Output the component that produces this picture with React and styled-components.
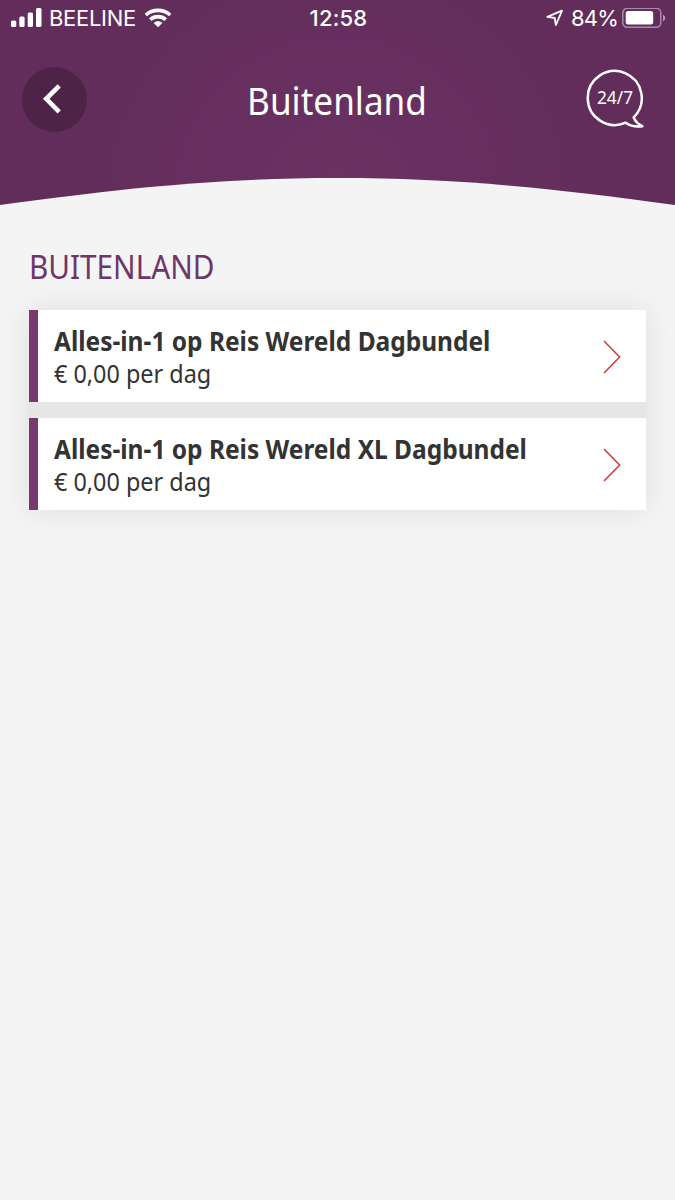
import styled, { createGlobalStyle } from 'styled-components'

const GlobalStyle = createGlobalStyle`
    *, *::before, *::after {
        box-sizing: border-box;
    }
    body {
        margin: 0;
        background: #f4f4f4;
        font-family: 'Noto Sans', 'Open Sans', sans-serif;
    }
`

const Screen = styled.div`
    width: 675px;
    height: 1200px;
    overflow: hidden;
    background: #f4f4f4;
`

const Header = styled.header`
    display: flex;
    flex-direction: column;
    height: 206px;
    background: radial-gradient(
        circle at 50% 200px,
        #6b3262 0,
        #662f5f 140px,
        #622d5a 290px
    );
`

const StatusBar = styled.div`
    display: grid;
    grid-template-columns: 1fr auto 1fr;
    align-items: center;
    height: 36px;
    padding: 0 9px 0 11px;
    color: #fff;
    font-family: Inter, 'Liberation Sans', sans-serif;
    font-size: 22px;
    line-height: 36px;
`

const StatusGroup = styled.div`
    display: flex;
    align-items: center;
    justify-content: ${(props) => (props.$end ? 'flex-end' : 'flex-start')};

    svg {
        flex: none;
    }
`

const StatusText = styled.span`
    margin: ${(props) => props.$margin || '0'};
    letter-spacing: ${(props) => props.$spacing || '0'};
    font-weight: ${(props) => props.$weight || 400};
    white-space: nowrap;
`

const NavBar = styled.div`
    display: grid;
    grid-template-columns: 66px 1fr 66px;
    align-items: center;
    height: 126px;
    padding: 0 23px 0 22px;
`

const BackButton = styled.button`
    display: flex;
    align-items: center;
    justify-content: center;
    width: 65px;
    height: 65px;
    padding: 0 3px 0 0;
    border: 0;
    border-radius: 50%;
    background: #4d2447;
`

const Title = styled.h1`
    margin: 2px 0 0;
    color: #fff;
    font-size: 39px;
    font-weight: 400;
    line-height: 50px;
    text-align: center;
    transform: scaleX(0.9);
`

const ChatButton = styled.button`
    width: 60px;
    height: 62px;
    padding: 0;
    border: 0;
    background: none;

    svg {
        display: block;
    }
`

const Wave = styled.svg`
    display: block;
    flex: none;
    margin-top: auto;
`

const Content = styled.main`
    padding: 38px 29px 0;
`

const SectionTitle = styled.h2`
    margin: 0 0 20px;
    color: #6f3468;
    font-size: 33px;
    font-weight: 400;
    line-height: 46px;
    transform: scaleX(0.9);
    transform-origin: left;
`

const BundleList = styled.div`
    display: flex;
    flex-direction: column;
    gap: 16px;
    box-shadow: 0 0 28px rgba(0, 0, 0, 0.09);
    background: #e6e6e6;
`

const BundleCard = styled.div`
    display: flex;
    align-items: center;
    justify-content: space-between;
    height: 92px;
    padding: 2px 24px 0 16px;
    border-left: 9px solid #79386f;
    background: #fff;
    color: #333;
`

const BundleName = styled.div`
    font-size: 26px;
    font-weight: 700;
    line-height: 32px;
    white-space: nowrap;
    transform: scaleX(0.942);
    transform-origin: left;
`

const BundlePrice = styled.div`
    font-size: 26px;
    font-weight: 400;
    line-height: 32px;
    transform: scaleX(0.9);
    transform-origin: left;
`

const bundles = [
    { name: 'Alles-in-1 op Reis Wereld Dagbundel', price: '€ 0,00 per dag' },
    { name: 'Alles-in-1 op Reis Wereld XL Dagbundel', price: '€ 0,00 per dag' },
]

function SignalIcon() {
    return (
        <svg width='31' height='20' viewBox='0 0 31 20' fill='#fff'>
            <rect x='0' y='12.5' width='5.3' height='6.5' rx='1.5' />
            <rect x='8.3' y='8.5' width='5.3' height='10.5' rx='1.5' />
            <rect x='16.7' y='4.5' width='5.3' height='14.5' rx='1.5' />
            <rect x='25' y='0' width='5.5' height='19' rx='1.5' />
        </svg>
    )
}

function WifiIcon() {
    return (
        <svg width='28' height='20' viewBox='0 0 28 20'>
            <g fill='none' stroke='#fff' strokeWidth='3.6'>
                <path d='M1.8 7C8.5 .8 19.5 .8 26.2 7' />
                <path d='M6.2 11.6C10.6 7.6 17.4 7.6 21.8 11.6' />
            </g>
            <path d='M9.6 15C12 12.5 16 12.5 18.4 15L14 19.3Z' fill='#fff' />
        </svg>
    )
}

function LocationIcon() {
    return (
        <svg width='18' height='18' viewBox='0 0 18 18'>
            <path
                d='M1.3 7.9L16 1.6L9.9 16L8.7 9Z'
                fill='none'
                stroke='#fff'
                strokeWidth='1.8'
                strokeLinejoin='round'
            />
        </svg>
    )
}

function BatteryIcon() {
    return (
        <svg width='44' height='21' viewBox='0 0 44 21'>
            <rect
                x='.8'
                y='.3'
                width='38'
                height='19'
                rx='4.5'
                fill='none'
                stroke='#fff'
                strokeOpacity='.45'
                strokeWidth='1.5'
            />
            <rect x='3.7' y='3' width='27.5' height='13.6' rx='2.5' fill='#fff' />
            <path d='M41 6.5Q43.3 7.5 43.3 10T41 13.5Z' fill='#fff' fillOpacity='.5' />
        </svg>
    )
}

function BackIcon() {
    return (
        <svg width='24' height='30' viewBox='0 0 24 30'>
            <path
                d='M18.2 1.8L5.2 14.8L18.2 27.8'
                fill='none'
                stroke='#fff'
                strokeWidth='4.6'
            />
        </svg>
    )
}

function ChatIcon() {
    return (
        <svg width='60' height='62' viewBox='0 0 60 62'>
            <path
                d='M47.6 49.3A27 27 0 1 0 39.6 54.7C43.8 57.8 50 59 56.4 58.2C52 56.2 49.2 53.4 47.6 49.3Z'
                fill='none'
                stroke='#fff'
                strokeWidth='2.5'
                strokeLinejoin='round'
            />
            <text
                x='11'
                y='36'
                fill='#fff'
                fontFamily='Noto Sans, sans-serif'
                fontSize='18'
                textLength='36'
                lengthAdjust='spacingAndGlyphs'
            >
                24/7
            </text>
        </svg>
    )
}

function ArrowIcon() {
    return (
        <svg width='20' height='34' viewBox='0 0 20 34'>
            <path
                d='M2 1L17.7 17L2 33'
                fill='none'
                stroke='#d32f2c'
                strokeWidth='1.4'
            />
        </svg>
    )
}

export default function App() {
    return (
        <>
            <GlobalStyle />
            <Screen>
                <Header>
                    <StatusBar>
                        <StatusGroup>
                            <SignalIcon />
                            <StatusText $margin='0 8px 0 7px' $spacing='-0.3px'>
                                BEELINE
                            </StatusText>
                            <WifiIcon />
                        </StatusGroup>
                        <StatusText $weight={450} $spacing='0.2px'>
                            12:58
                        </StatusText>
                        <StatusGroup $end>
                            <LocationIcon />
                            <StatusText $margin='0 4px 0 7px' $spacing='-0.8px'>
                                84%
                            </StatusText>
                            <BatteryIcon />
                        </StatusGroup>
                    </StatusBar>
                    <NavBar>
                        <BackButton aria-label='Terug'>
                            <BackIcon />
                        </BackButton>
                        <Title>Buitenland</Title>
                        <ChatButton>
                            <ChatIcon />
                        </ChatButton>
                    </NavBar>
                    <Wave width='675' height='28' viewBox='0 0 675 28'>
                        <path
                            d='M0 27C130 9 225 0 337.5 0S545 9 675 27V28H0Z'
                            fill='#f4f4f4'
                        />
                    </Wave>
                </Header>
                <Content>
                    <SectionTitle>BUITENLAND</SectionTitle>
                    <BundleList>
                        {bundles.map((bundle) => (
                            <BundleCard key={bundle.name}>
                                <div>
                                    <BundleName>{bundle.name}</BundleName>
                                    <BundlePrice>{bundle.price}</BundlePrice>
                                </div>
                                <ArrowIcon />
                            </BundleCard>
                        ))}
                    </BundleList>
                </Content>
            </Screen>
        </>
    )
}
